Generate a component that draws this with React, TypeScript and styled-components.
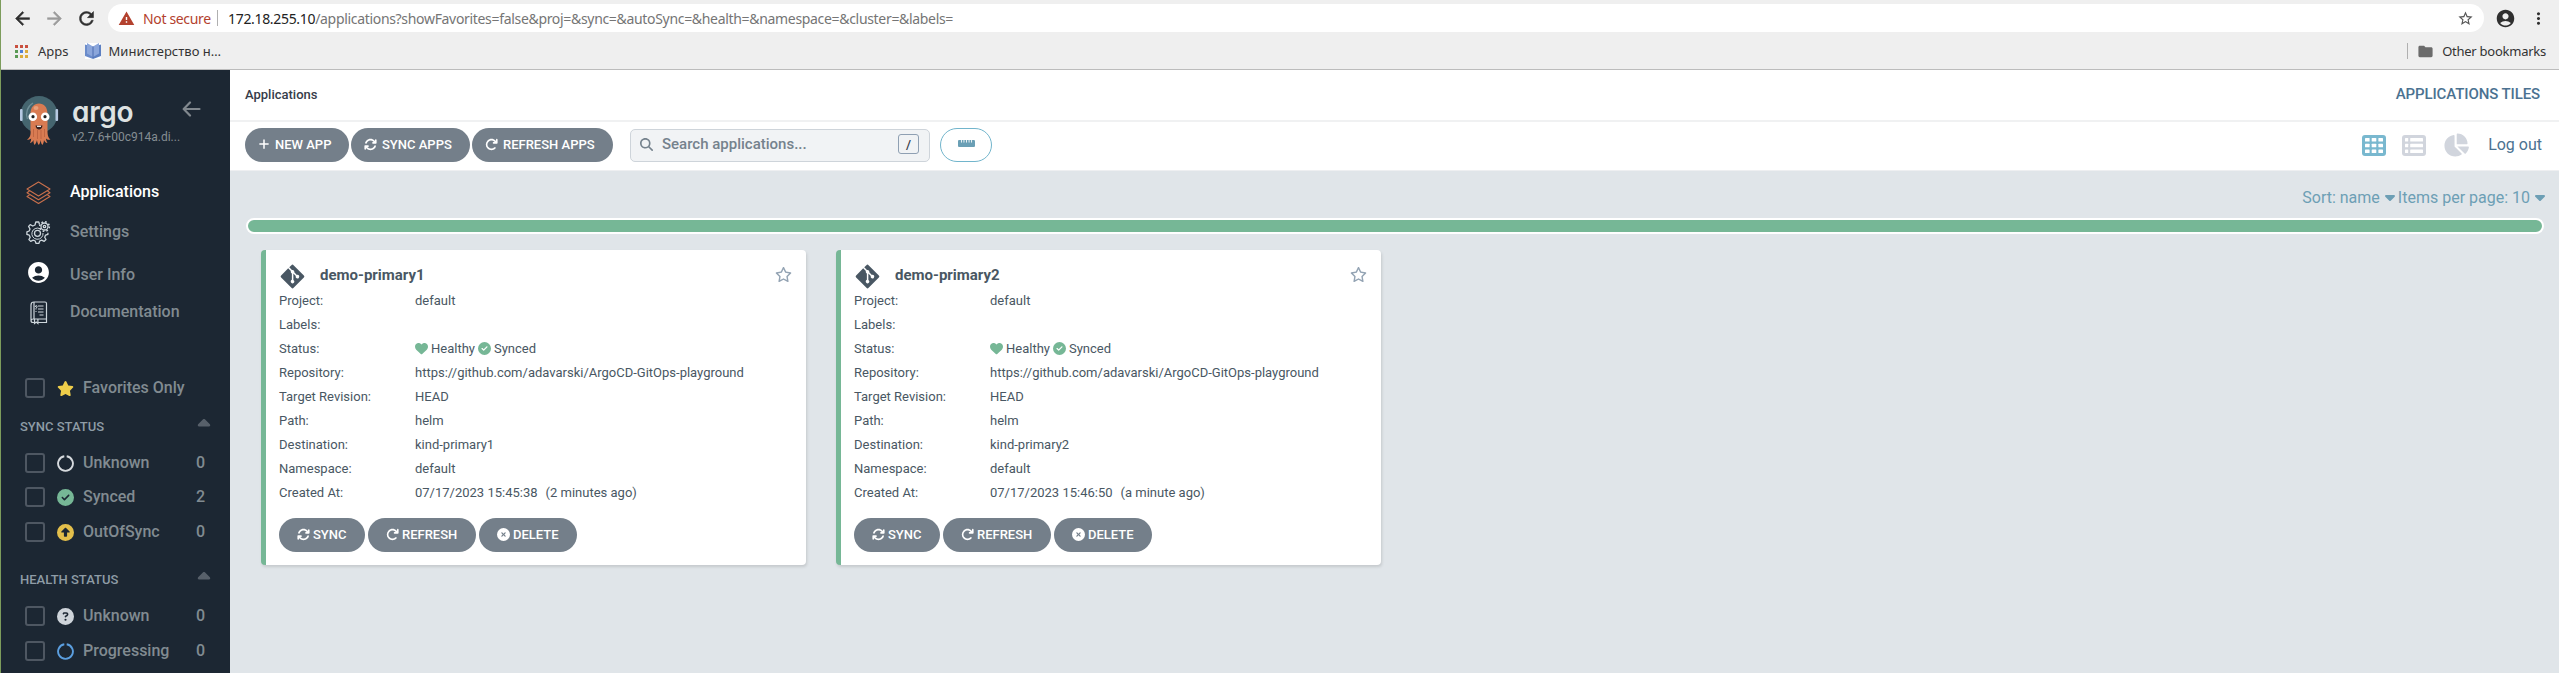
import React from 'react';
import styled, { createGlobalStyle } from 'styled-components';
import {
  FaArrowRotateRight, FaArrowsRotate, FaCaretDown, FaCaretUp, FaChartPie, FaCircleCheck, FaCircleQuestion,
  FaCircleUp, FaCircleXmark, FaGitAlt, FaHeart, FaMagnifyingGlass, FaPlus, FaRegStar, FaRulerHorizontal, FaStar,
} from 'react-icons/fa6';
import {
  MdAccountCircle, MdArrowBack, MdArrowForward, MdFolder, MdMoreVert, MdRefresh, MdStarBorder, MdWarning,
} from 'react-icons/md';

const Global = createGlobalStyle`
  *, *::before, *::after { box-sizing: border-box; }
  body { margin: 0; overflow: hidden; background: #e0e5e9; }
  svg { display: block; flex: none; }
`;

const Window = styled.div`
  height: 673px;
  border-left: 1px solid #7c9c5c;
  display: flex;
  flex-direction: column;
  font-family: Roboto, "Liberation Sans", sans-serif;
  font-size: 13px;
  color: #495763;
  white-space: nowrap;
`;

/* ---------- browser ---------- */

const Browser = styled.header`
  height: 70px;
  flex: none;
  background: #efefef;
  border-bottom: 1px solid #bcbcbc;
  font-family: "Noto Sans", "Open Sans", sans-serif;
  color: #333;
`;

const AddressRow = styled.div`
  display: flex;
  align-items: center;
  height: 36px;
  padding-left: 11px;
`;

const NavIcon = styled.span<{ $dim?: boolean }>`
  width: 32px;
  color: ${(p) => (p.$dim ? '#9b9b9b' : '#2f2f2f')};
  & path { stroke-width: 0; }
  & path:last-child { stroke: currentColor; stroke-width: 0.6; }
`;

const AddressBar = styled.div`
  display: flex;
  align-items: center;
  width: 2376px;
  height: 28px;
  border-radius: 14px;
  background: #fff;
  padding: 0 10px;
  font-size: 14px;
`;

const Insecure = styled.span`
  width: 74px;
  margin-left: 8px;
  color: #b3412e;
  letter-spacing: -0.35px;
`;

const Divider = styled.span<{ $gap: number }>`
  width: 1px;
  height: 16px;
  background: #b0b0b0;
  margin-right: ${(p) => p.$gap}px;
`;

const Host = styled.span`
  color: #222;
  letter-spacing: -0.32px;
`;

const Path = styled.span`
  flex: 1;
  color: #757575;
  letter-spacing: -0.32px;
`;

const BarIcon = styled.span<{ $left: number }>`
  margin-left: ${(p) => p.$left}px;
  color: #2f2f2f;
`;

const Bookmarks = styled.div`
  display: flex;
  align-items: center;
  height: 30px;
  padding: 0 13px 0 14px;
  font-size: 13px;
`;

const Bookmark = styled.span<{ $left: number; $track?: number }>`
  margin-left: ${(p) => p.$left}px;
  letter-spacing: ${(p) => p.$track ?? 0}px;
`;

const Spacer = styled.span`
  flex: 1;
`;

/* ---------- sidebar ---------- */

const Body = styled.div`
  display: flex;
  flex: 1;
  min-height: 0;
`;

const Sidebar = styled.aside`
  width: 229px;
  flex: none;
  overflow: hidden;
  background: #1c2733;
  color: #818b91;
  font-size: 16px;
  font-weight: 500;
`;

const Brand = styled.div`
  display: flex;
  height: 102px;
  padding: 24px 0 0 18px;
`;

const BrandText = styled.div`
  width: 110px;
  margin-left: 11px;
`;

const Wordmark = styled.div`
  height: 34px;
  font: 600 28px/36px Inter, Roboto, sans-serif;
  font-feature-settings: "cv11";
  letter-spacing: -0.3px;
  color: #dee2e2;
`;

const Version = styled.div`
  font-size: 12px;
  font-weight: 400;
  line-height: 19px;
  color: #858d92;
`;

const Collapse = styled.span`
  padding-top: 7px;
`;

const MenuItem = styled.a<{ $active?: boolean; $h: number; $shift?: number }>`
  display: flex;
  align-items: center;
  height: ${(p) => p.$h}px;
  padding-left: 25px;
  color: ${(p) => (p.$active ? '#fff' : '#818b91')};
  & > svg { margin-top: ${(p) => p.$shift ?? 0}px; }
  & > span { margin-left: 19px; padding-bottom: 1px; }
`;

const Filter = styled.label<{ $mt?: number }>`
  display: flex;
  align-items: center;
  height: 20px;
  margin-top: ${(p) => p.$mt ?? 15}px;
  padding: 0 25px 0 24px;
  & > svg { margin: 0 9px 0 12px; }
`;

const FilterText = styled.span`
  padding-bottom: 1px;
`;

const Check = styled.span`
  width: 20px;
  height: 20px;
  border: 2px solid #4e5762;
  border-radius: 3px;
`;

const Section = styled.div<{ $mt: number }>`
  display: flex;
  align-items: center;
  justify-content: space-between;
  height: 18px;
  margin-top: ${(p) => p.$mt}px;
  padding: 1px 16px 0 19px;
  font-size: 13px;
  color: #8e9ca6;
  & > svg { color: #57606a; margin-top: -5px; }
`;

/* ---------- main ---------- */

const Main = styled.main`
  flex: 1;
  min-width: 0;
  display: flex;
  flex-direction: column;
  background: #e0e5e9;
`;

const TitleBar = styled.div`
  display: flex;
  align-items: center;
  justify-content: space-between;
  height: 52px;
  padding: 0 19px 2px 15px;
  background: #fff;
  border-bottom: 2px solid #f0f1f2;
  font-weight: 500;
  color: #363c4a;
`;

const ViewTitle = styled.span`
  font-size: 15px;
  letter-spacing: -0.1px;
  color: #4b7291;
`;

const Toolbar = styled.div`
  display: flex;
  align-items: center;
  height: 49px;
  padding: 0 17px 3px 15px;
  background: #fff;
  border-bottom: 1px solid #eeeff1;
`;

const Button = styled.button<{ $w: number; $pad: number; $gap: number; $mr: number }>`
  display: flex;
  align-items: center;
  flex: none;
  width: ${(p) => p.$w}px;
  height: 34px;
  margin: 0 ${(p) => p.$mr}px 0 0;
  padding: 0 0 1px ${(p) => p.$pad}px;
  gap: ${(p) => p.$gap}px;
  border: 0;
  border-radius: 17px;
  background: #747f8a;
  color: #fff;
  font: 500 13px Roboto, sans-serif;
`;

const Search = styled.div`
  display: flex;
  align-items: center;
  width: 300px;
  height: 33px;
  margin: 1px 10px 0 15px;
  padding: 0 10px 2px 9px;
  border: 1px solid #ced4da;
  border-radius: 5px;
  background: #f1f3f5;
  color: #75828d;
  font-size: 15px;
  font-weight: 500;
  & > span { flex: 1; margin-left: 9px; }
`;

const Key = styled.kbd`
  display: grid;
  place-items: center;
  width: 21px;
  height: 20px;
  border: 1px solid #8fa0b3;
  border-radius: 3px;
  color: #363c4a;
  font: 500 13px Roboto, sans-serif;
`;

const OutlineButton = styled.button`
  display: grid;
  place-items: center;
  width: 52px;
  height: 34px;
  padding: 0 0 3px;
  border: 1px solid #72b5cc;
  border-radius: 17px;
  background: #fff;
  color: #6a9fb5;
`;

const ViewIcon = styled.span<{ $on?: boolean; $mr: number }>`
  margin: 1px ${(p) => p.$mr}px 0 0;
  color: ${(p) => (p.$on ? '#79b8cf' : '#d1d5dd')};
`;

const Logout = styled.a`
  font-size: 16px;
  color: #4b7291;
`;

const Sorting = styled.div`
  display: flex;
  align-items: center;
  justify-content: flex-end;
  height: 47px;
  padding: 5px 11px 0 0;
  font-size: 16px;
  color: #6d9fb5;
  & > svg { margin: 0 0 0 2px; }
`;

const HealthBar = styled.div`
  height: 16px;
  margin: 0 15px 0 16px;
  border: 2px solid #fff;
  border-radius: 8px;
  background: #76b796;
`;

const Tiles = styled.div`
  display: grid;
  grid-template-columns: repeat(4, 545px);
  gap: 30px;
  padding: 16px 0 0 31px;
`;

const Tile = styled.article`
  height: 315px;
  padding: 0 14px 0 13px;
  border-left: 5px solid #76b796;
  border-radius: 4px;
  background: #fff;
  box-shadow: 1px 2px 3px rgba(0, 0, 0, 0.12);
`;

const TileHead = styled.div`
  display: flex;
  align-items: center;
  height: 39px;
  padding-top: 13px;
  color: #495763;
  & > svg:last-child { color: #93a3b3; margin-top: -4px; }
`;

const TileName = styled.h2`
  flex: 1;
  margin: 0 0 0 14px;
  padding-bottom: 3px;
  font-size: 15px;
  font-weight: 700;
`;

const Field = styled.div`
  display: flex;
  align-items: center;
  height: 24px;
  padding-bottom: 1px;
  & > b { width: 136px; font-weight: 400; }
`;

const Status = styled.span`
  display: flex;
  align-items: center;
  gap: 3px;
  & > svg { color: #76b796; }
`;

const Ago = styled.span`
  margin-left: 8px;
`;

const Actions = styled.div`
  display: flex;
  padding-top: 13px;
`;

/* ---------- drawings ---------- */

const AppsGrid = () => (
  <svg width="13" height="13" viewBox="0 0 13 13">
    {['#c9503f', '#c9503f', '#c9503f', '#5a9a55', '#4f7fd6', '#dbab3a', '#5a9a55', '#dbab3a', '#dbab3a'].map((c, i) => (
      <rect key={i} x={(i % 3) * 5} y={Math.floor(i / 3) * 5} width="3" height="3" fill={c} />
    ))}
  </svg>
);

const Book = () => (
  <svg width="16" height="16" viewBox="0 0 16 16">
    <rect width="16" height="16" fill="#fff" />
    <path d="M0 1.5 8 4v12L0 13Z" fill="#6b8ccb" />
    <path d="M16 1.5 8 4v12l8-3Z" fill="#5d80c2" />
    <path d="M2 0l6 3.5L14 0v10.500L8 14l-6-3.500Z" fill="#8ba6db" />
    <path d="M8 3.500V15" stroke="#4c6db0" />
  </svg>
);

const Octopus = () => (
  <svg width="42" height="52" viewBox="0 0 42 52">
    <circle cx="20" cy="20.500" r="18.500" fill="#45656f" />
    <path d="M8.500 25A13 13 0 0 1 14 9" fill="none" stroke="#6f8f98" strokeWidth="1.300" />
    <rect x="1" y="15" width="2.600" height="12" rx="1" fill="#b7c9e2" />
    <rect x="36.500" y="15" width="2.600" height="12" rx="1" fill="#b7c9e2" />
    <g transform="translate(0 1)">
      <path
        d="M11.500 19C11.500 12 15 8.500 20 8.500S28.500 12 28.500 19V36c0 5 1 7 3 8.500-2 .8-3.500 0-4.500-1 .2 2 .7 3.300 1.500 4.500-2 0-3-1.500-3.500-3-.2 2-.6 3.500-1.500 5-1.300-1-1.600-3-1.700-5-.5 2.300-1 3.700-2 5-1-1.300-1.700-2.700-1.800-5-.5 2-1.200 3.700-2.500 5-.9-1.500-1-3-1-5-.8 1.800-2 2.800-3.500 3 .8-1.500 1.200-3 1.200-4.500-1.200 1-2.500 1.500-4.200 1 2.500-1.500 4-4 3.500-8.500Z"
        fill="#d97b52"
      />
      <path d="M14.500 34v8M18.500 35v9M22 35v9M25.500 34v8" stroke="#b9603f" strokeWidth=".8" />
      <ellipse cx="17" cy="13" rx="2.500" ry="2" fill="#e9a17c" />
      <circle cx="13.800" cy="21.700" r="4.300" fill="#fff" />
      <circle cx="26.200" cy="21.700" r="4.300" fill="#fff" />
      <circle cx="14" cy="21.700" r="1.600" fill="#222" />
      <circle cx="26" cy="21.700" r="1.600" fill="#222" />
      <path d="M16.500 30.500h7c-.3 2.800-1.700 4-3.500 4s-3.200-1.200-3.500-4Z" fill="#3a2220" />
      <path d="M18 30.700h4v1.200h-4Z" fill="#fff" />
    </g>
  </svg>
);

const LongArrow = () => (
  <svg width="19" height="16" viewBox="0 0 19 16" fill="none" stroke="#81888e" strokeWidth="2.200" strokeLinecap="round" strokeLinejoin="round">
    <path d="M17.500 8H2M8 1.500 1.700 8 8 14.500" />
  </svg>
);

const Layers = () => (
  <svg width="25" height="24" viewBox="0 0 25 24" fill="none" stroke="#c9704c" strokeWidth="1.100" strokeLinejoin="round">
    <path d="M12.500 1 24 8l-11.500 7L1 8Z" />
    <path d="M3.500 10 1 11.700l11.500 7 11.500-7L21.500 10" />
    <path d="M3.500 14 1 15.500l11.500 7 11.500-7L21.500 14" />
  </svg>
);

const Gears = () => (
  <svg width="25" height="24" viewBox="0 0 25 24" fill="none" stroke="#cdd6dc" strokeWidth="1.300" strokeLinejoin="round">
    <path d="M13.500 4.500l-.7-2.500H9.800L9 5 6.800 6 4.200 4.600 2.600 6.400 4 9l-.8 2-2.300.8v2.600l2.400.8.9 2-1.300 2.400 1.800 1.800 2.500-1.300 2 .9.9 2.400h2.800l.8-2.400 2-.9 2.500 1.300 1.800-1.900-1.300-2.300.9-2.100 2.300-.8v-1.500" />
    <circle cx="11.500" cy="13.300" r="3" />
    <path d="M14 8.700A5.600 5.600 0 1 0 17 13" strokeWidth="1" />
    <circle cx="18.500" cy="6.500" r="3.500" />
    <circle cx="18.500" cy="6.500" r="1.200" />
    <circle cx="18.500" cy="6.500" r="4.800" strokeDasharray="1.700 2.070" strokeWidth="1.600" />
  </svg>
);

const Manual = () => (
  <svg width="25" height="24" viewBox="0 0 25 24" fill="none" stroke="#cdd6dc" strokeWidth="1.200">
    <path d="M20.500 19V2.500q0-1.500-1.500-1.500H8Q5 1 5 4v15.500q0 2 2 2h1.500M12 21.500h8.500V18H7.500Q5 18 5 20" />
    <path d="M8 1v17M8.500 18v4.500l1.700-1.500 1.700 1.500V18M12 5h5.500M12 8h5.500M12 11h5.500M13.500 14h4" />
    <path d="M9.300 6q0-1.500 1-1.500T11 6L10 7.500v1M10 10v1" strokeWidth="1" />
  </svg>
);

const Ring = ({ color }: { color: string }) => (
  <svg width="17" height="17" viewBox="0 0 17 17" fill="none" stroke={color} strokeWidth="1.900">
    <path d="M7.300 1.200a7.400 7.400 0 1 0 2.400 0" />
  </svg>
);

const TableIcon = () => (
  <svg width="24" height="21" viewBox="0 0 24 21">
    <rect width="24" height="21" rx="3" fill="currentColor" />
    {[0, 1, 2].map((r) => [0, 1, 2].map((c) => (
      <rect key={`${r}${c}`} x={3 + c * 6.700} y={3 + r * 5.700} width="4.600" height="3.600" rx=".6" fill="#fff" />
    )))}
  </svg>
);

const ListIcon = () => (
  <svg width="24" height="21" viewBox="0 0 24 21">
    <rect width="24" height="21" rx="3" fill="currentColor" />
    {[0, 1, 2].map((r) => (
      <g key={r} fill="#fff">
        <rect x="3" y={3 + r * 5.700} width="3.200" height="3.600" rx=".6" />
        <rect x="8.200" y={3 + r * 5.700} width="12.800" height="3.600" rx=".6" />
      </g>
    ))}
  </svg>
);

/* ---------- page ---------- */

type AppInfo = { name: string; cluster: string; created: string; ago: string };

const apps: AppInfo[] = [
  { name: 'demo-primary1', cluster: 'kind-primary1', created: '07/17/2023 15:45:38', ago: '(2 minutes ago)' },
  { name: 'demo-primary2', cluster: 'kind-primary2', created: '07/17/2023 15:46:50', ago: '(a minute ago)' },
];

const AppTile = ({ app }: { app: AppInfo }) => (
  <Tile>
    <TileHead>
      <FaGitAlt size={27} />
      <TileName>{app.name}</TileName>
      <FaRegStar size={17} />
    </TileHead>
    <Field><b>Project:</b>default</Field>
    <Field><b>Labels:</b></Field>
    <Field>
      <b>Status:</b>
      <Status><FaHeart size={13} />Healthy<FaCircleCheck size={13} />Synced</Status>
    </Field>
    <Field><b>Repository:</b>https://github.com/adavarski/ArgoCD-GitOps-playground</Field>
    <Field><b>Target Revision:</b>HEAD</Field>
    <Field><b>Path:</b>helm</Field>
    <Field><b>Destination:</b>{app.cluster}</Field>
    <Field><b>Namespace:</b>default</Field>
    <Field><b>Created At:</b>{app.created}<Ago>{app.ago}</Ago></Field>
    <Actions>
      <Button $w={86} $pad={18} $gap={3} $mr={3}><FaArrowsRotate size={13} />SYNC</Button>
      <Button $w={108} $pad={18} $gap={3} $mr={3}><FaArrowRotateRight size={13} />REFRESH</Button>
      <Button $w={98} $pad={18} $gap={3} $mr={0}><FaCircleXmark size={13} />DELETE</Button>
    </Actions>
  </Tile>
);

const FilterRow = ({ icon, label, count, mt }: { icon: React.ReactNode; label: string; count?: number; mt?: number }) => (
  <Filter $mt={mt}><Check />{icon}<FilterText>{label}</FilterText><Spacer /><FilterText>{count}</FilterText></Filter>
);

export default function App() {
  return (
    <Window>
      <Global />
      <Browser>
        <AddressRow>
          <NavIcon><MdArrowBack size={21} /></NavIcon>
          <NavIcon $dim><MdArrowForward size={21} /></NavIcon>
          <NavIcon><MdRefresh size={21} /></NavIcon>
          <AddressBar>
            <MdWarning size={17} color="#b3412e" />
            <Insecure>Not secure</Insecure>
            <Divider $gap={10} />
            <Host>172.18.255.10</Host>
            <Path>/applications?showFavorites=false&amp;proj=&amp;sync=&amp;autoSync=&amp;health=&amp;namespace=&amp;cluster=&amp;labels=</Path>
            <MdStarBorder size={17} color="#555" />
          </AddressBar>
          <BarIcon $left={11}><MdAccountCircle size={21} /></BarIcon>
          <BarIcon $left={13}><MdMoreVert size={19} /></BarIcon>
        </AddressRow>
        <Bookmarks>
          <AppsGrid />
          <Bookmark $left={10}>Apps</Bookmark>
          <Bookmark $left={16}><Book /></Bookmark>
          <Bookmark $left={8}>Министерство н…</Bookmark>
          <Spacer />
          <Divider $gap={9} />
          <MdFolder size={17} color="#6b6b6b" />
          <Bookmark $left={8} $track={-0.25}>Other bookmarks</Bookmark>
        </Bookmarks>
      </Browser>
      <Body>
        <Sidebar>
          <Brand>
            <Octopus />
            <BrandText>
              <Wordmark>argo</Wordmark>
              <Version>v2.7.6+00c914a.di...</Version>
            </BrandText>
            <Collapse><LongArrow /></Collapse>
          </Brand>
          <MenuItem $active $h={40} $shift={2}><Layers /><span>Applications</span></MenuItem>
          <MenuItem $h={40}><Gears /><span>Settings</span></MenuItem>
          <MenuItem $h={46} $shift={-6}><MdAccountCircle size={25} color="#fff" /><span>User Info</span></MenuItem>
          <MenuItem $h={28} $shift={1}><Manual /><span>Documentation</span></MenuItem>
          <FilterRow mt={52} icon={<FaStar size={17} color="#efce4a" />} label="Favorites Only" />
          <Section $mt={19}>SYNC STATUS<FaCaretUp size={20} /></Section>
          <FilterRow mt={18} icon={<Ring color="#d6dade" />} label="Unknown" count={0} />
          <FilterRow mt={14} icon={<FaCircleCheck size={17} color="#76b796" />} label="Synced" count={2} />
          <FilterRow icon={<FaCircleUp size={17} color="#e3bf4b" />} label="OutOfSync" count={0} />
          <Section $mt={28}>HEALTH STATUS<FaCaretUp size={20} /></Section>
          <FilterRow mt={18} icon={<FaCircleQuestion size={17} color="#ced4da" />} label="Unknown" count={0} />
          <FilterRow icon={<Ring color="#5b9fe0" />} label="Progressing" count={0} />
        </Sidebar>
        <Main>
          <TitleBar>
            Applications
            <ViewTitle>APPLICATIONS TILES</ViewTitle>
          </TitleBar>
          <Toolbar>
            <Button $w={104} $pad={13} $gap={5} $mr={2}><FaPlus size={12} />NEW APP</Button>
            <Button $w={119} $pad={13} $gap={5} $mr={2}><FaArrowsRotate size={13} />SYNC APPS</Button>
            <Button $w={141} $pad={13} $gap={5} $mr={2}><FaArrowRotateRight size={13} />REFRESH APPS</Button>
            <Search><FaMagnifyingGlass size={13} /><span>Search applications...</span><Key>/</Key></Search>
            <OutlineButton><FaRulerHorizontal size={17} /></OutlineButton>
            <Spacer />
            <ViewIcon $on $mr={16}><TableIcon /></ViewIcon>
            <ViewIcon $mr={17}><ListIcon /></ViewIcon>
            <ViewIcon $mr={19}><FaChartPie size={26} /></ViewIcon>
            <Logout>Log out</Logout>
          </Toolbar>
          <Sorting>
            <span>Sort: name</span><FaCaretDown size={16} />
            <span>Items per page: 10</span><FaCaretDown size={16} />
          </Sorting>
          <HealthBar />
          <Tiles>{apps.map((a) => <AppTile key={a.name} app={a} />)}</Tiles>
        </Main>
      </Body>
    </Window>
  );
}
